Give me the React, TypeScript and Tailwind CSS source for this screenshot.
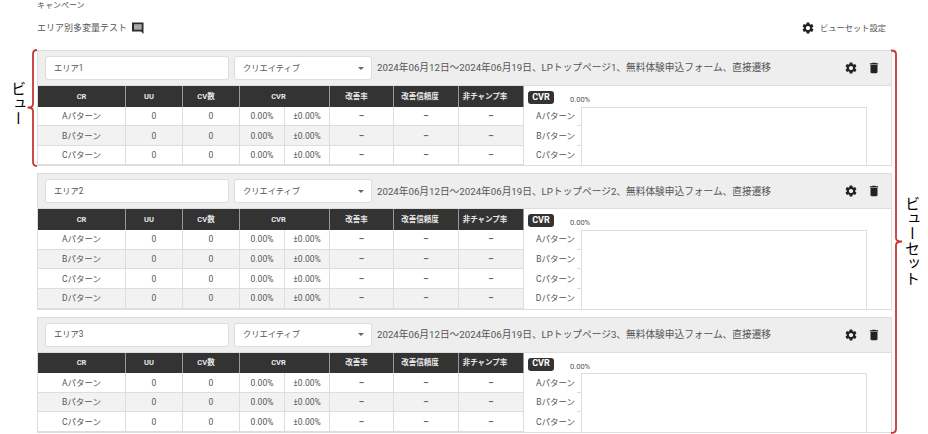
import { MdDelete, MdSettings } from 'react-icons/md';

const columns = 'grid grid-cols-[88px_57px_57px_45px_45px_64px_65px_65px]';
const cellBorder = 'border-r border-b border-[#dddddd]';

const views = [
    { name: 'エリア1', page: 1, patterns: ['A', 'B', 'C'] },
    { name: 'エリア2', page: 2, patterns: ['A', 'B', 'C', 'D'] },
    { name: 'エリア3', page: 3, patterns: ['A', 'B', 'C'] },
];

// ヘッダーの文字はソート矢印の分だけ左に寄っている
const HeaderCell = ({ label, className }: { label: string; className: string }) => (
    <div className={`flex items-center justify-center border-r border-[#999999] text-[7.5px] font-bold text-[#e8e8e8] ${className}`}>
        {label}
    </div>
);

const Cell = ({ children }: { children: string }) => (
    <div className={`flex items-center justify-center pt-px ${cellBorder}`}>{children}</div>
);

const Dash = () => (
    <div className={`flex items-center justify-center pt-px font-bold text-[#666666] ${cellBorder}`}>–</div>
);

const CommentIcon = () => (
    <svg width="12" height="12" viewBox="0 0 12 12" className="ml-[5px]">
        <path d="M0 0.5 H11.5 V12 L9 9.5 H0 Z" fill="#2b2b2b" />
        <rect x="2" y="2.2" width="7.7" height="5.5" fill="#a8a8a8" />
    </svg>
);

const ViewCard = ({ name, page, patterns }: { name: string; page: number; patterns: string[] }) => (
    <div className="w-[855px] border border-[#dddddd] bg-white text-[#555555]">
        <div className="flex h-[35px] items-center border-b border-[#dddddd] bg-[#eeeeee] pl-[7px] pr-[10px]">
            <div className="flex h-[24px] w-[184px] items-center rounded-[3px] border border-[#dddddd] bg-white pl-[8px] text-[8.25px]">
                {name}
            </div>
            <div className="ml-[5px] flex h-[24px] w-[138px] items-center justify-between rounded-[3px] border border-[#dddddd] bg-white pl-[8px] pr-[7px] text-[8.25px]">
                クリエイティブ
                <span className="h-0 w-0 border-x-[3.5px] border-t-[3.5px] border-x-transparent border-t-[#666666]" />
            </div>
            <div className="ml-[5px] pt-px text-[9.7px] whitespace-nowrap">
                2024年06月12日～2024年06月19日、LPトップページ{page}、無料体験申込フォーム、直接遷移
            </div>
            <div className="ml-auto flex items-center gap-[9px] text-[#222222]">
                <MdSettings size={14} />
                <MdDelete size={14} />
            </div>
        </div>
        <div className="flex">
            <div className="w-[486px] text-[8.5px]">
                <div className={`${columns} h-[20.5px] bg-[#333333]`}>
                    <HeaderCell label="CR" className="" />
                    <HeaderCell label="UU" className="pr-[10px]" />
                    <HeaderCell label="CV数" className="pr-[10px]" />
                    <HeaderCell label="CVR" className="col-span-2 pr-[12px]" />
                    <HeaderCell label="改善率" className="pr-[10px]" />
                    <HeaderCell label="改善信頼度" className="pr-[12px]" />
                    <HeaderCell label="非チャンプ率" className="pr-[12px]" />
                </div>
                {patterns.map((pattern, index) => (
                    <div
                        key={pattern}
                        className={`${columns} h-[19.67px] ${index % 2 === 1 ? 'bg-[#f2f2f2]' : 'bg-white'}`}
                    >
                        <Cell>{`${pattern}パターン`}</Cell>
                        <Cell>0</Cell>
                        <Cell>0</Cell>
                        <Cell>0.00%</Cell>
                        <Cell>±0.00%</Cell>
                        <Dash />
                        <Dash />
                        <Dash />
                    </div>
                ))}
            </div>
            <div className="flex-1 pr-[24px]">
                <div className="flex h-[20.5px] items-start pl-[4px] pt-[5px]">
                    <span className="flex h-[13px] w-[26px] items-center justify-center rounded-[3px] bg-[#333333] text-[9px] font-bold text-white">
                        CVR
                    </span>
                    <span className="ml-[16px] mt-[3px] text-[7.5px]">0.00%</span>
                </div>
                <div className="flex border-t border-[#dddddd]">
                    <div className="-mt-px w-[57px] bg-white text-[8.5px]">
                        {patterns.map((pattern, index) => (
                            <div key={pattern} className="relative flex h-[19.67px] items-center justify-end pr-[6px]">
                                {pattern}パターン
                                {index < patterns.length - 1 && (
                                    <span className="absolute bottom-0 right-0 h-px w-[4px] bg-[#dddddd]" />
                                )}
                            </div>
                        ))}
                    </div>
                    <div className="flex-1 border-x border-[#dddddd] bg-white" />
                </div>
            </div>
        </div>
    </div>
);

const App = () => {
    return (
        <div className="relative h-[434px] w-[928px] overflow-hidden bg-white pl-[37px] font-['Roboto','Noto_Sans_CJK_JP',sans-serif] text-[#555555]">
            <div className="flex h-[50px] w-[855px] flex-col">
                <div className="h-[12px] pt-[1px] text-[8px] leading-[10px]">キャンペーン</div>
                <div className="flex items-center pt-[8px]">
                    <span className="text-[9px] leading-[14px]">エリア別多変量テスト</span>
                    <CommentIcon />
                    <span className="ml-auto flex items-center pr-[6px] pt-[1px] text-[8.25px]">
                        <MdSettings size={14} className="mr-[5px] text-[#222222]" />
                        ビューセット設定
                    </span>
                </div>
            </div>
            <div className="flex flex-col gap-[7px]">
                {views.map((view) => (
                    <ViewCard key={view.name} {...view} />
                ))}
            </div>

            {/* 注釈 */}
            <svg className="pointer-events-none absolute left-0 top-0" width="928" height="434" fill="none" stroke="#c93636" strokeWidth="1.8">
                <path d="M37 50 Q33 50 33 54 V104 Q33 107.5 27.5 107.5 Q33 107.5 33 111 V162 Q33 166 37 166" />
                <path d="M891 50.5 Q896 50.5 896 54 V238 Q896 241.5 902 241.5 Q896 241.5 896 245 V429 Q896 433 891 433" />
            </svg>
            <div className="absolute left-[9px] top-[81px] text-[15px] leading-[15px] text-black [writing-mode:vertical-rl]">ビュー</div>
            <div className="absolute left-[903px] top-[196px] text-[15px] leading-[15px] text-black [writing-mode:vertical-rl]">ビューセット</div>
        </div>
    );
};

export default App;
